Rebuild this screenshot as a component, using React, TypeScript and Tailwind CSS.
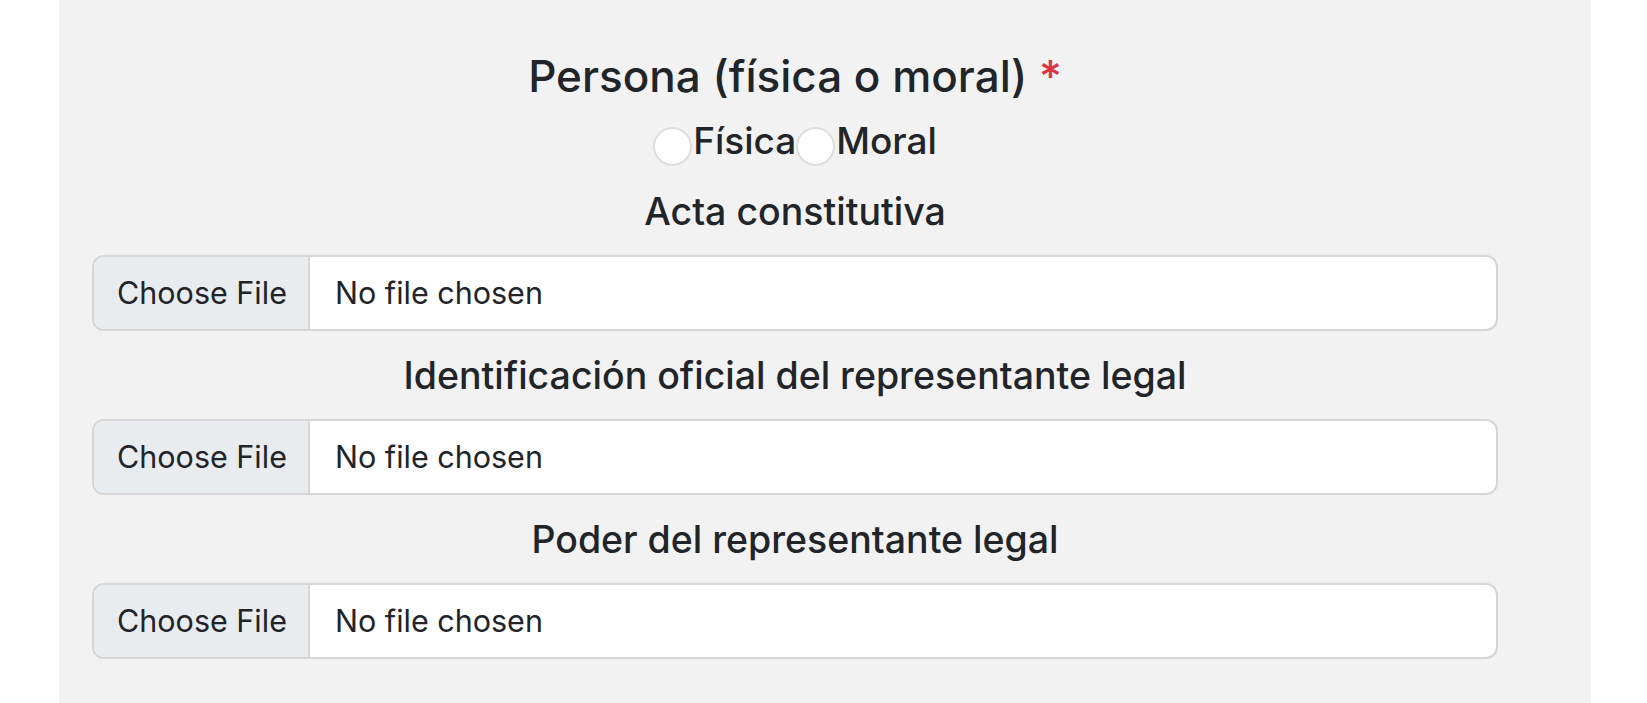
import { useState } from "react";

const FONT = { fontFamily: "Inter, 'Noto Sans', sans-serif" };

export default function App() {
  const [persona, setPersona] = useState<string>("");

  return (
    <div className="min-h-[703px] w-full bg-white text-[#212529]" style={FONT}>
      <div className="ml-[59px] min-h-[703px] w-[1532px] bg-[#f2f2f2] pt-[49px] pb-[45px]">
        <div className="ml-[33px] flex w-[1406px] flex-col items-center">
          {/* Title */}
          <h2 className="text-[44px] leading-[54px] font-medium">
            Persona (física o moral) <span className="text-[#dc3545]">*</span>
          </h2>

          {/* Radios */}
          <div className="mt-[14px] flex items-start text-[37px] leading-[48px] font-medium">
            <Radio label="Física" checked={persona === "fisica"} onClick={() => setPersona("fisica")} />
            <Radio label="Moral" checked={persona === "moral"} onClick={() => setPersona("moral")} />
          </div>

          <FileField label="Acta constitutiva" first />
          <FileField label="Identificación oficial del representante legal" />
          <FileField label="Poder del representante legal" />
        </div>
      </div>
    </div>
  );
}

function Radio({ label, checked, onClick }: { label: string; checked: boolean; onClick: () => void }) {
  return (
    <label className="flex cursor-pointer items-start" onClick={onClick}>
      <span
        className={`mt-[10px] mr-[1px] block h-[39px] w-[39px] rounded-full border-2 ${
          checked ? "border-[#0d6efd] bg-[#0d6efd]" : "border-[#dedede] bg-white"
        }`}
      />
      <span>{label}</span>
    </label>
  );
}

function FileField({ label, first }: { label: string; first?: boolean }) {
  return (
    <div className={`flex w-full flex-col items-center ${first ? "mt-[22px]" : "mt-[21px]"}`}>
      <label className="text-[37.5px] leading-[48px] font-medium">{label}</label>
      <div className="mt-[19px] flex h-[76px] w-full overflow-hidden rounded-[12px] border-2 border-[#d6d6d6] bg-white text-[30.5px]">
        <span className="flex w-[216px] items-center border-r-2 border-[#d6d6d6] bg-[#e9ecef] pl-[23px]">
          Choose File
        </span>
        <span className="flex items-center pl-[25px]">No file chosen</span>
      </div>
    </div>
  );
}
